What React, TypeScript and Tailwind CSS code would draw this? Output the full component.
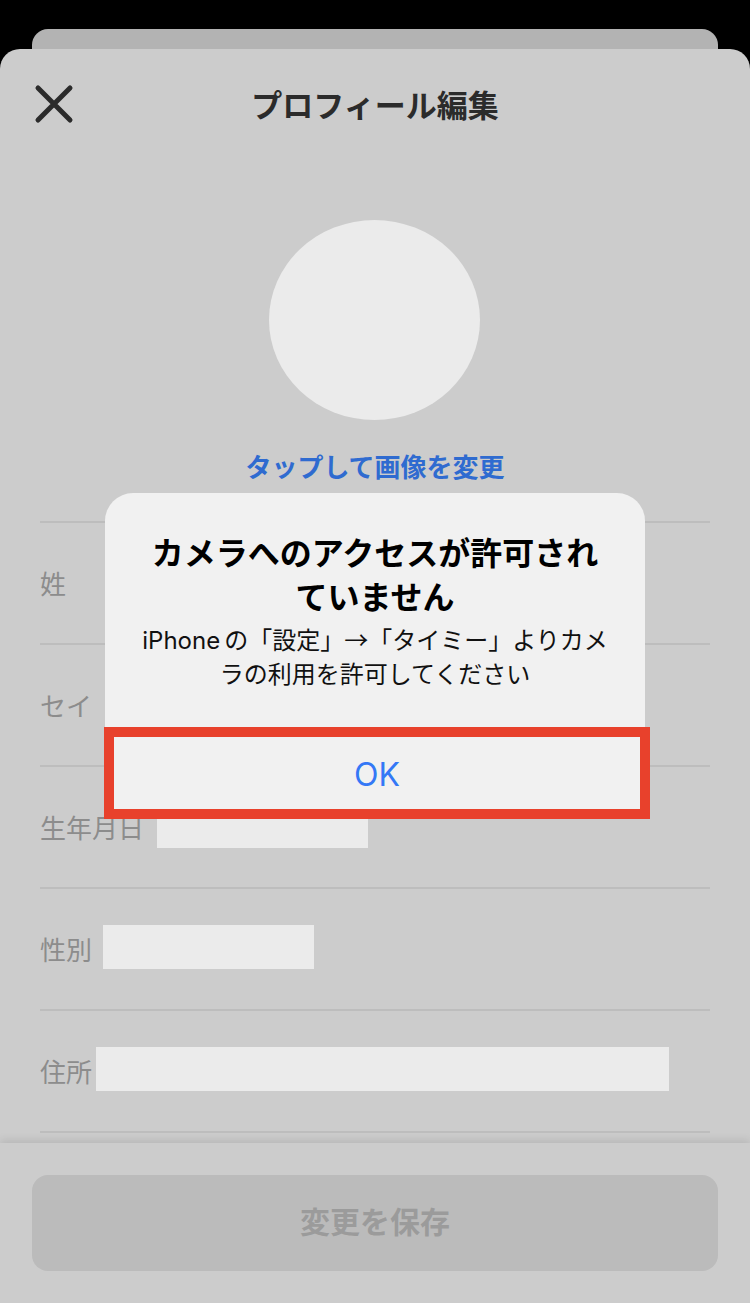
import React from "react";

const jp = { fontFamily: "'Noto Sans CJK JP', 'Noto Sans', sans-serif" };
const latin = { fontFamily: "Inter, 'Noto Sans CJK JP', sans-serif" };

function Row({ label, box }: { label: string; box?: React.ReactNode }) {
  return (
    <div className="flex flex-col">
      <div className="h-[2px] bg-[#bdbdbd]" />
      <div className="h-[120px] flex items-center">
        <span className="text-[26px] leading-none text-[#8c8c8c]" style={jp}>
          {label}
        </span>
        {box}
      </div>
    </div>
  );
}

export default function App() {
  return (
    <div className="relative w-[750px] h-[1303px] bg-black overflow-hidden" style={jp}>
      <div className="pt-[29px]">
        <div className="mx-[32px] h-[20px] rounded-t-[16px] bg-[#b3b3b3]" />
        <div className="h-[1254px] rounded-t-[20px] bg-[#cccccc] flex flex-col">
          {/* header */}
          <div className="h-[110px] flex items-center relative">
            <svg className="ml-[34px]" width="40" height="40" viewBox="0 0 40 40">
              <path d="M4 4 L36 36 M36 4 L4 36" stroke="#2b2b2b" strokeWidth="5" strokeLinecap="round" />
            </svg>
            <div className="absolute left-0 right-0 text-center text-[31px] font-bold text-[#2b2b2b]">
              プロフィール編集
            </div>
          </div>
          {/* content */}
          <div className="flex-1 overflow-hidden flex flex-col">
            <div className="flex flex-col items-center">
              <div className="mt-[61px] ml-[-1px] w-[211px] h-[200px] rounded-[50%] bg-[#ebebeb]" />
              <div className="mt-[30px] text-[26px] leading-[32px] font-bold text-[#2f6bd0]">
                タップして画像を変更
              </div>
            </div>
            <div className="mt-[39px] mx-[40px] flex flex-col">
              <Row label="姓" />
              <Row label="セイ" />
              <Row
                label="生年月日"
                box={<div className="ml-[13px] w-[211px] h-[46px] mt-[-5px] bg-[#ebebeb]" />}
              />
              <Row
                label="性別"
                box={<div className="ml-[11px] w-[211px] h-[44px] mt-[-4px] bg-[#ebebeb]" />}
              />
              <Row
                label="住所"
                box={<div className="ml-[4px] w-[573px] h-[44px] mt-[-4px] bg-[#ebebeb]" />}
              />
              <div className="h-[2px] bg-[#bdbdbd]" />
            </div>
          </div>
          {/* bottom bar */}
          <div className="h-[160px] bg-[#cccccc] shadow-[0_-3px_8px_rgba(0,0,0,0.10)] relative">
            <div className="mx-[32px] mt-[32px] h-[96px] rounded-[16px] bg-[#bbbbbb] flex items-center justify-center">
              <span className="text-[30px] leading-none mt-[-6px] font-bold text-[#9b9b9b]">変更を保存</span>
            </div>
          </div>
        </div>
      </div>

      {/* alert */}
      <div className="absolute left-[105px] top-[493px] w-[540px] h-[326px] rounded-[28px] bg-[#f1f1f1] flex flex-col items-center">
        <div className="mt-[36px] text-[32px] leading-[44px] font-bold text-black text-center whitespace-nowrap">
          カメラへのアクセスが許可され
          <br />
          ていません
        </div>
        <div className="mt-[6px] text-[24px] leading-[32px] text-[#111] text-center whitespace-nowrap">
          <span style={latin}>iPhone</span>
          <span className="ml-[4px]">の「設定」→「タイミー」よりカメ</span>
          <br />
          ラの利用を許可してください
        </div>
      </div>
      <div className="absolute left-[104px] top-[727px] w-[546px] h-[92px] border-[10px] border-[#e8412c] bg-[#f1f1f1] flex items-center justify-center">
        <span className="text-[32px] leading-none mt-[4px] text-[#3478f6]" style={latin}>
          OK
        </span>
      </div>
    </div>
  );
}
